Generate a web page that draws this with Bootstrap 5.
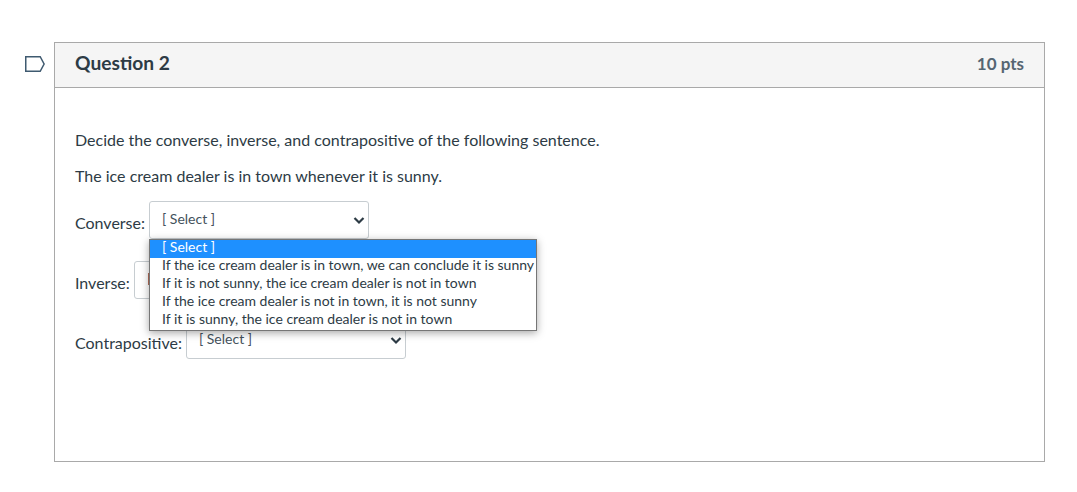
<!DOCTYPE html>
<html lang="en">
<head>
<meta charset="utf-8">
<title>Question 2</title>
<link href="https://cdn.jsdelivr.net/npm/bootstrap@5.3.0/dist/css/bootstrap.min.css" rel="stylesheet">
<style>
html,body{background:#fff;height:492px;overflow:hidden}
body{font-family:Lato,"Liberation Sans",sans-serif;color:#2d3b45;font-size:16px;line-height:24px}
.quiz-page{padding:42px 32px 0 25px;gap:9px}
.quiz-flag{width:20px;height:16px;margin-top:14px;flex:none}
.quiz-card{width:991px;height:420px;border:1px solid #a9a9a9;border-radius:0;color:#2d3b45;flex:none}
.quiz-head{background:#f5f5f5;border-bottom:1px solid #a9a9a9;border-radius:0!important;height:45px;padding:0 20px;margin:0}
.quiz-title{font-size:19.2px;font-weight:700;line-height:24px;margin:-5px 0 0}
.quiz-pts{font-size:17px;font-weight:700;color:#556572;line-height:24px;margin-top:-3px}
.quiz-body{padding:40px 20px 0}
.quiz-text{margin:0 0 12px;line-height:24px}
.quiz-text+.quiz-row{margin-top:13px}
.quiz-row{height:37px;margin-bottom:23px;gap:4px;padding-top:0}
.quiz-row label{line-height:24px;margin-top:10px}
.quiz-sel{width:220px;height:38px;flex:none;border:1px solid #c7cdd1;border-radius:3px;font-size:14px;line-height:20px;color:#44525c;padding:7px 30px 9px 12px;background-size:12px 9px;background-position:right 3px center;background-image:url("data:image/svg+xml,%3Csvg xmlns='http://www.w3.org/2000/svg' viewBox='0 0 12 9'%3E%3Cpath d='M1.5 2 6 6.5 10.5 2' fill='none' stroke='%232d3b45' stroke-width='2.2'/%3E%3C/svg%3E");font-family:Lato,"Liberation Sans",sans-serif}
.quiz-anchor{position:relative}
.quiz-list{position:absolute;left:0;top:38px;width:388px;z-index:5;background:#fff;border:1px solid #767676;box-shadow:0 2px 8px rgba(0,0,0,.35);font-size:14px;padding:0;margin:0;list-style:none;white-space:nowrap}
.quiz-list li{height:18px;padding-left:12px;line-height:13px}
.quiz-list li.quiz-on{background:#1e90ff;color:#fff}
.quiz-mark{position:absolute;left:14px;top:12px;width:2px;height:12px;background:#b5705c}
</style>
</head>
<body>
<main class="quiz-page d-flex align-items-start">
  <svg class="quiz-flag" viewBox="0 0 20 16" aria-hidden="true"><path d="M.75.75H15.2L19.1 8 15.2 15.25H.75Z" fill="#fff" stroke="#3f5a70" stroke-width="1.5"/></svg>
  <section class="card quiz-card">
    <header class="card-header quiz-head d-flex justify-content-between align-items-center">
      <h2 class="quiz-title">Question 2</h2>
      <span class="quiz-pts">10 pts</span>
    </header>
    <div class="card-body quiz-body">
      <p class="quiz-text">Decide the converse, inverse, and contrapositive of the following sentence.</p>
      <p class="quiz-text">The ice cream dealer is in town whenever it is sunny.</p>
      <div class="quiz-row d-flex align-items-start">
        <label for="q1">Converse:</label>
        <div class="quiz-anchor">
          <select id="q1" class="form-select quiz-sel"><option>[ Select ]</option></select>
          <ul class="quiz-list">
            <li class="quiz-on">[ Select ]</li>
            <li>If the ice cream dealer is in town, we can conclude it is sunny</li>
            <li>If it is not sunny, the ice cream dealer is not in town</li>
            <li>If the ice cream dealer is not in town, it is not sunny</li>
            <li>If it is sunny, the ice cream dealer is not in town</li>
          </ul>
        </div>
      </div>
      <div class="quiz-row d-flex align-items-start">
        <label for="q2">Inverse:</label>
        <div class="quiz-anchor">
          <select id="q2" class="form-select quiz-sel"><option></option></select>
          <span class="quiz-mark"></span>
        </div>
      </div>
      <div class="quiz-row d-flex align-items-start">
        <label for="q3">Contrapositive:</label>
        <div class="quiz-anchor">
          <select id="q3" class="form-select quiz-sel"><option>[ Select ]</option></select>
        </div>
      </div>
    </div>
  </section>
</main>
<script src="https://cdn.jsdelivr.net/npm/bootstrap@5.3.0/dist/js/bootstrap.bundle.min.js"></script>
</body>
</html>
